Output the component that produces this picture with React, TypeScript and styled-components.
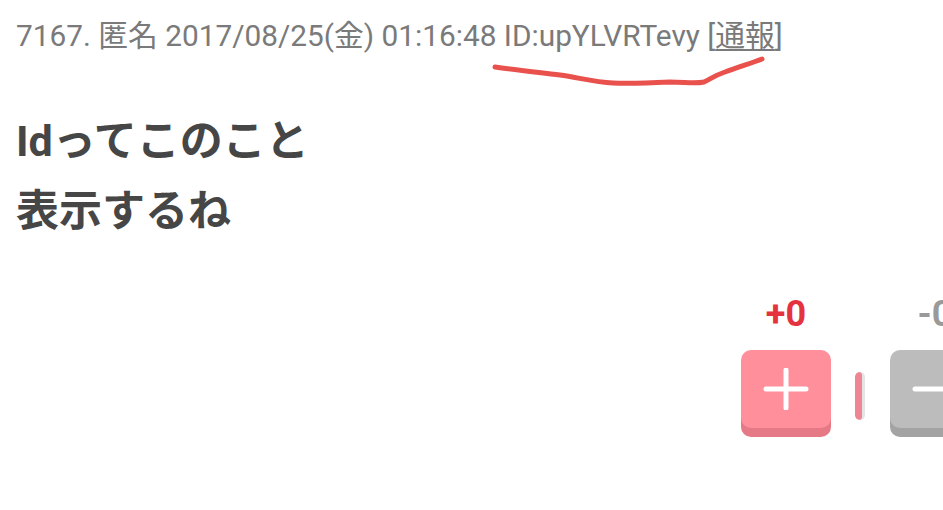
import styled, { createGlobalStyle } from 'styled-components';

const GlobalStyle = createGlobalStyle`
  html, body {
    margin: 0;
    padding: 0;
    background: #ffffff;
  }
  body {
    font-family: Roboto, "Noto Sans CJK JP", sans-serif;
    overflow: hidden;
  }
`;

const StyledPage = styled.div`
  width: 943px;
  height: 510px;
  overflow: hidden;
  box-sizing: border-box;
  padding: 14px 0 0 16px;
`;

const StyledMeta = styled.div`
  position: relative;
  font-size: 29.8px;
  line-height: 44px;
  color: #7a7a7a;
  white-space: nowrap;
`;

const StyledReport = styled.span`
  text-decoration: underline;
  text-underline-offset: 3px;
  text-decoration-thickness: 2px;
`;

const StyledScribble = styled.svg`
  position: absolute;
  left: 464px;
  top: 36px;
  overflow: visible;
`;

const StyledBody = styled.div`
  margin-top: 48px;
  font-size: 43px;
  line-height: 70px;
  font-weight: 700;
  color: #464646;
`;

const StyledVoteArea = styled.div`
  display: flex;
  align-items: flex-end;
  margin-top: 48px;
  margin-left: 725px;
  & > * {
    flex-shrink: 0;
  }
`;

const StyledVoteColumn = styled.div`
  display: flex;
  flex-direction: column;
  align-items: center;
  gap: 16px;
`;

const StyledCount = styled.span<{ tone: 'good' | 'bad' }>`
  font-size: 36px;
  line-height: 40px;
  font-weight: 700;
  color: ${({ tone }) => (tone === 'good' ? '#e5323f' : '#9a9a9a')};
`;

const StyledVoteButton = styled.div<{ tone: 'good' | 'bad' }>`
  display: flex;
  align-items: center;
  justify-content: center;
  width: 90px;
  height: 78px;
  border-radius: 10px;
  background: ${({ tone }) => (tone === 'good' ? '#ff8f9a' : '#bcbcbc')};
  box-shadow: 0 9px 0 ${({ tone }) => (tone === 'good' ? '#e57985' : '#a3a3a3')};
  margin-bottom: 9px;
`;

const StyledRatio = styled.div`
  display: flex;
  width: 10px;
  height: 48px;
  margin: 0 25px 17px 24px;
  border-radius: 5px;
  overflow: hidden;
  background: #e4e4e4;
`;

const StyledRatioFill = styled.div`
  width: 7px;
  height: 100%;
  background: #ee8594;
  border-radius: 5px;
`;

function PlusIcon() {
  return (
    <svg width="46" height="42" viewBox="0 0 46 42">
      <path d="M3 21H43M23 2V40" stroke="#fff" strokeWidth="5" strokeLinecap="round" />
    </svg>
  );
}

function MinusIcon() {
  return (
    <svg width="46" height="42" viewBox="0 0 46 42">
      <path d="M3 21H43" stroke="#fff" strokeWidth="5" strokeLinecap="round" />
    </svg>
  );
}

export default function App(): JSX.Element {
  return (
    <>
      <GlobalStyle />
      <StyledPage>
        <StyledMeta>
          7167. 匿名 2017/08/25(金) 01:16:48 ID:upYLVRTevy [<StyledReport>通報</StyledReport>]
          <StyledScribble width="300" height="40" viewBox="0 0 300 40">
            <path
              d="M15 17 C35 20 55 22 80 25 C100 28 115 32 133 33 C150 34 170 33 190 32 C205 32 215 34 224 32 C232 28 236 25 245 22 C258 17 272 13 282 9"
              fill="none"
              stroke="#e9514c"
              strokeWidth="5"
              strokeLinecap="round"
            />
          </StyledScribble>
        </StyledMeta>
        <StyledBody>
          <div>Idってこのこと</div>
          <div>表示するね</div>
        </StyledBody>
        <StyledVoteArea>
          <StyledVoteColumn>
            <StyledCount tone="good">+0</StyledCount>
            <StyledVoteButton tone="good">
              <PlusIcon />
            </StyledVoteButton>
          </StyledVoteColumn>
          <StyledRatio>
            <StyledRatioFill />
          </StyledRatio>
          <StyledVoteColumn>
            <StyledCount tone="bad">-0</StyledCount>
            <StyledVoteButton tone="bad">
              <MinusIcon />
            </StyledVoteButton>
          </StyledVoteColumn>
        </StyledVoteArea>
      </StyledPage>
    </>
  );
}
